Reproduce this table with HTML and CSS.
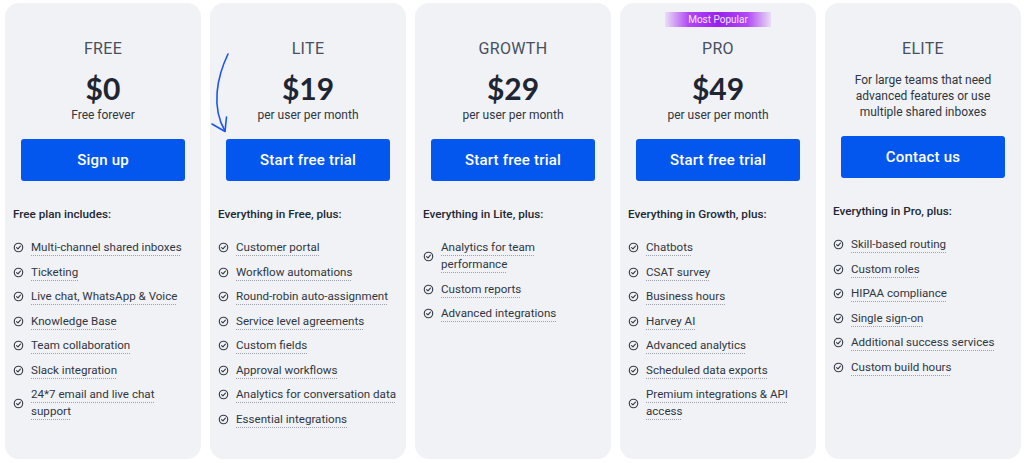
FILE: index.html
```html
<!DOCTYPE html>
<html lang="en">
<head>
<meta charset="utf-8">
<title>Pricing</title>
<link rel="stylesheet" href="styles.css">
</head>
<body>
<svg width="0" height="0" class="defs">
  <defs>
    <symbol id="chk" viewBox="0 0 12 12">
      <circle cx="6" cy="6" r="4.6" fill="none" stroke="currentColor" stroke-width="1.25"/>
      <path d="M3.9 6.1 L5.4 7.5 L8.1 4.6" fill="none" stroke="currentColor" stroke-width="1.25" stroke-linecap="round" stroke-linejoin="round"/>
    </symbol>
  </defs>
</svg>
<main class="plans">
  <section class="card">
    <h2 class="plan-name">FREE</h2>
    <div class="price">$0</div>
    <div class="price-note">Free forever</div>
    <a class="btn">Sign up</a>
    <h3 class="includes">Free plan includes:</h3>
    <ul class="features">
      <li><svg class="chk"><use href="#chk"/></svg><span>Multi-channel shared inboxes</span></li>
      <li><svg class="chk"><use href="#chk"/></svg><span>Ticketing</span></li>
      <li><svg class="chk"><use href="#chk"/></svg><span>Live chat, WhatsApp &amp; Voice</span></li>
      <li><svg class="chk"><use href="#chk"/></svg><span>Knowledge Base</span></li>
      <li><svg class="chk"><use href="#chk"/></svg><span>Team collaboration</span></li>
      <li><svg class="chk"><use href="#chk"/></svg><span>Slack integration</span></li>
      <li><svg class="chk"><use href="#chk"/></svg><span class="narrow">24*7 email and live chat support</span></li>
    </ul>
  </section>
  <section class="card">
    <svg class="arrow" width="30" height="140" viewBox="0 0 30 140">
      <path d="M18 51 C 7 74, 1 104, 15 128" fill="none" stroke="#1a55ee" stroke-width="1.6" stroke-linecap="round"/>
      <path d="M2 121 L15 128.5 L16.5 114" fill="none" stroke="#1a55ee" stroke-width="1.6" stroke-linecap="round" stroke-linejoin="round"/>
    </svg>
    <h2 class="plan-name">LITE</h2>
    <div class="price">$19</div>
    <div class="price-note">per user per month</div>
    <a class="btn">Start free trial</a>
    <h3 class="includes">Everything in Free, plus:</h3>
    <ul class="features">
      <li><svg class="chk"><use href="#chk"/></svg><span>Customer portal</span></li>
      <li><svg class="chk"><use href="#chk"/></svg><span>Workflow automations</span></li>
      <li><svg class="chk"><use href="#chk"/></svg><span>Round-robin auto-assignment</span></li>
      <li><svg class="chk"><use href="#chk"/></svg><span>Service level agreements</span></li>
      <li><svg class="chk"><use href="#chk"/></svg><span>Custom fields</span></li>
      <li><svg class="chk"><use href="#chk"/></svg><span>Approval workflows</span></li>
      <li><svg class="chk"><use href="#chk"/></svg><span>Analytics for conversation data</span></li>
      <li><svg class="chk"><use href="#chk"/></svg><span>Essential integrations</span></li>
    </ul>
  </section>
  <section class="card">
    <h2 class="plan-name">GROWTH</h2>
    <div class="price">$29</div>
    <div class="price-note">per user per month</div>
    <a class="btn">Start free trial</a>
    <h3 class="includes">Everything in Lite, plus:</h3>
    <ul class="features">
      <li><svg class="chk"><use href="#chk"/></svg><span class="narrow">Analytics for team performance</span></li>
      <li><svg class="chk"><use href="#chk"/></svg><span>Custom reports</span></li>
      <li><svg class="chk"><use href="#chk"/></svg><span>Advanced integrations</span></li>
    </ul>
  </section>
  <section class="card">
    <div class="badge">Most Popular</div>
    <h2 class="plan-name">PRO</h2>
    <div class="price">$49</div>
    <div class="price-note">per user per month</div>
    <a class="btn">Start free trial</a>
    <h3 class="includes">Everything in Growth, plus:</h3>
    <ul class="features">
      <li><svg class="chk"><use href="#chk"/></svg><span>Chatbots</span></li>
      <li><svg class="chk"><use href="#chk"/></svg><span>CSAT survey</span></li>
      <li><svg class="chk"><use href="#chk"/></svg><span>Business hours</span></li>
      <li><svg class="chk"><use href="#chk"/></svg><span>Harvey AI</span></li>
      <li><svg class="chk"><use href="#chk"/></svg><span>Advanced analytics</span></li>
      <li><svg class="chk"><use href="#chk"/></svg><span>Scheduled data exports</span></li>
      <li><svg class="chk"><use href="#chk"/></svg><span class="narrow">Premium integrations &amp; API access</span></li>
    </ul>
  </section>
  <section class="card">
    <h2 class="plan-name">ELITE</h2>
    <p class="desc">For large teams that need advanced features or use multiple shared inboxes</p>
    <a class="btn">Contact us</a>
    <h3 class="includes">Everything in Pro, plus:</h3>
    <ul class="features">
      <li><svg class="chk"><use href="#chk"/></svg><span>Skill-based routing</span></li>
      <li><svg class="chk"><use href="#chk"/></svg><span>Custom roles</span></li>
      <li><svg class="chk"><use href="#chk"/></svg><span>HIPAA compliance</span></li>
      <li><svg class="chk"><use href="#chk"/></svg><span>Single sign-on</span></li>
      <li><svg class="chk"><use href="#chk"/></svg><span>Additional success services</span></li>
      <li><svg class="chk"><use href="#chk"/></svg><span>Custom build hours</span></li>
    </ul>
  </section>
</main>
</body>
</html>
```

FILE: styles.css
```css
* { box-sizing: border-box; }
html, body { margin: 0; padding: 0; background: #ffffff; }
body {
  font-family: "Roboto", "Liberation Sans", sans-serif;
  color: #2b3240;
  padding: 3px 4px 0 5px;
}
.defs { position: absolute; }
.plans {
  display: grid;
  grid-template-columns: repeat(5, 196px);
  column-gap: 9px;
}
.card {
  position: relative;
  height: 456px;
  background: #f1f2f6;
  border-radius: 14px;
  padding: 34px 16px 0 16px;
  display: flex;
  flex-direction: column;
  align-items: stretch;
}
.plan-name {
  margin: 0;
  text-align: center;
  font-size: 16px;
  line-height: 24px;
  font-weight: 400;
  color: #46505f;
  letter-spacing: 0.3px;
}
.price {
  margin-top: 10px;
  text-align: center;
  font-family: "Lato", "Roboto", sans-serif;
  font-size: 30px;
  line-height: 34px;
  font-weight: 700;
  color: #1f2633;
}
.price-note {
  margin-top: 2px;
  text-align: center;
  font-size: 12px;
  line-height: 16px;
  color: #2f3642;
}
.desc {
  margin: 11px 0 0;
  text-align: center;
  font-size: 12px;
  line-height: 16px;
  color: #2f3642;
}
.btn {
  display: flex;
  align-items: center;
  justify-content: center;
  margin-top: 16px;
  height: 42px;
  border-radius: 3px;
  background: #0457ee;
  color: #ffffff;
  font-size: 15px;
  font-weight: 500;
  letter-spacing: 0.2px;
}
.includes {
  margin: 25px -8px 0;
  font-size: 11.7px;
  line-height: 17px;
  font-weight: 500;
  color: #222833;
}
.features {
  list-style: none;
  margin: 16px -8px 0;
  padding: 0;
  display: flex;
  flex-direction: column;
  gap: 7.5px;
}
.features li {
  display: flex;
  align-items: center;
  gap: 7px;
  font-size: 11.6px;
  line-height: 17px;
  color: #2f3642;
}
.features li span {
  text-decoration: underline dotted #9aa1ad;
  text-underline-offset: 4px;
  text-decoration-thickness: 1px;
}
.features li .narrow { max-width: 148px; }
.chk {
  flex: none;
  width: 11px;
  height: 11px;
  color: #363c47;
}
.badge {
  position: absolute;
  top: 9px;
  left: 45px;
  width: 106px;
  height: 15px;
  line-height: 15px;
  text-align: center;
  font-size: 10px;
  color: #f4e6ff;
  background: linear-gradient(90deg, rgba(190,110,245,0.15) 0%, #b14af3 22%, #9a1fef 50%, #b14af3 78%, rgba(190,110,245,0.15) 100%);
}
.arrow {
  position: absolute;
  left: 0;
  top: 0;
  overflow: visible;
}
```
